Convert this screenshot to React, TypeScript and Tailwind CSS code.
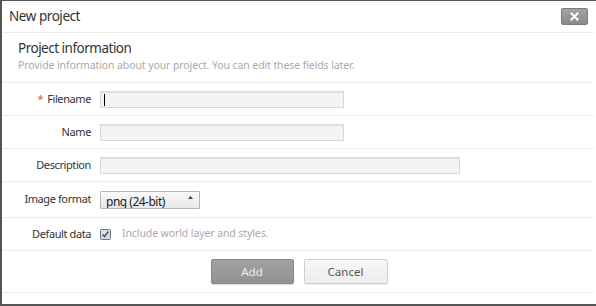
import React from "react";

const font = { fontFamily: '"Noto Sans", "Open Sans", sans-serif' };

function Row({ label, required, children }: { label: string; required?: boolean; children: React.ReactNode }) {
  return (
    <div className="flex h-[33px] items-center border-b border-[#ebebeb]">
      <div className="w-[90px] shrink-0 pr-[1px] text-right text-[11px] tracking-[-0.4px] text-[#333]">
        {required && <span className="mr-[4px] text-[#e4571f]">*</span>}
        {label}
      </div>
      <div className="ml-[8px] flex items-center">{children}</div>
    </div>
  );
}

function TextInput({ width, caret }: { width: string; caret?: boolean }) {
  return (
    <div className={`relative h-[17px] ${width} border border-[#d9d9d9] bg-[#f4f4f4] shadow-[inset_0_1px_1px_rgba(0,0,0,0.08)]`}>
      {caret && <span className="absolute left-[3px] top-[2px] h-[12px] w-px bg-black" />}
    </div>
  );
}

export default function App() {
  return (
    <div className="h-[306px] w-[596px] bg-white" style={font}>
      <div className="flex h-[306px] w-[596px] flex-col border-b-2 border-l-2 border-t border-[#555] pr-[2px]">
        <div className="flex h-[32px] items-center justify-between border-b border-[#ebebeb] pl-[7px] pr-[6px]">
          <span className="text-[13.5px] tracking-[-0.45px] text-[#333]">New project</span>
          <div className="flex h-[17px] w-[27px] items-center justify-center rounded-[2px] border border-[#7c7c7c] bg-gradient-to-b from-[#a3a3a3] to-[#8a8a8a]">
            <svg width="9" height="9" viewBox="0 0 9 9">
              <path d="M1.5 1.5 L7.5 7.5 M7.5 1.5 L1.5 7.5" stroke="#fff" strokeWidth="2" strokeLinecap="square" />
            </svg>
          </div>
        </div>
        <div className="h-[50px] border-b border-[#ebebeb] pl-[16px] pt-[6px]">
          <div className="text-[13.5px] leading-[19px] tracking-[-0.5px] text-[#333]">Project information</div>
          <div className="text-[10.5px] leading-[15px] tracking-[-0.1px] text-[#aaa]">
            Provide information about your project. You can edit these fields later.
          </div>
        </div>
        <Row label="Filename" required>
          <TextInput width="w-[244px]" caret />
        </Row>
        <Row label="Name">
          <TextInput width="w-[244px]" />
        </Row>
        <Row label="Description">
          <TextInput width="w-[360px]" />
        </Row>
        <div className="flex h-[36px] items-center border-b border-[#ebebeb]">
          <div className="w-[90px] shrink-0 pr-[1px] text-right text-[11px] tracking-[-0.4px] text-[#333]">Image format</div>
          <div className="relative ml-[8px] h-[18px] w-[100px] overflow-hidden rounded-[1px] border border-[#b5b5b5] bg-gradient-to-b from-[#fafafa] to-[#e8e8e8]">
            <span className="absolute left-[5px] top-[2px] text-[12px] leading-[16px] tracking-[-0.5px] text-[#222]">png (24-bit)</span>
            <svg className="absolute right-[6px] top-[4px]" width="5" height="3" viewBox="0 0 5 3">
              <path d="M0 3 L2.5 0 L5 3 Z" fill="#444" />
            </svg>
          </div>
        </div>
        <div className="flex h-[33px] items-center border-b border-[#ebebeb]">
          <div className="w-[90px] shrink-0 pr-[1px] text-right text-[11px] tracking-[-0.4px] text-[#333]">Default data</div>
          <div className="ml-[8px] flex items-center">
            <svg width="11" height="11" viewBox="0 0 11 11">
              <rect x="0.5" y="0.5" width="10" height="10" rx="1" fill="#d9dde4" stroke="#6e788c" />
              <path d="M2.5 5.5 L4.5 7.5 L8.5 2.5" stroke="#4f586a" strokeWidth="1.6" fill="none" />
            </svg>
            <span className="ml-[11px] text-[10.5px] tracking-[-0.1px] text-[#aaa]">Include world layer and styles.</span>
          </div>
        </div>
        <div className="flex h-[42px] items-center justify-center gap-[10px] border-b border-[#ebebeb] pl-[2px]">
          <button className="h-[25px] w-[83px] rounded-[2px] border border-[#888] bg-gradient-to-b from-[#a2a2a2] to-[#929292] text-[11.5px] text-[#f0f0f0] shadow-[0_1px_1px_rgba(0,0,0,0.15)]">
            Add
          </button>
          <button className="h-[25px] w-[84px] rounded-[2px] border border-[#cfcfcf] bg-gradient-to-b from-[#f7f7f7] to-[#ececec] text-[11.5px] text-[#555] shadow-[0_1px_1px_rgba(0,0,0,0.08)]">
            Cancel
          </button>
        </div>
        <div className="flex-1" />
      </div>
    </div>
  );
}
